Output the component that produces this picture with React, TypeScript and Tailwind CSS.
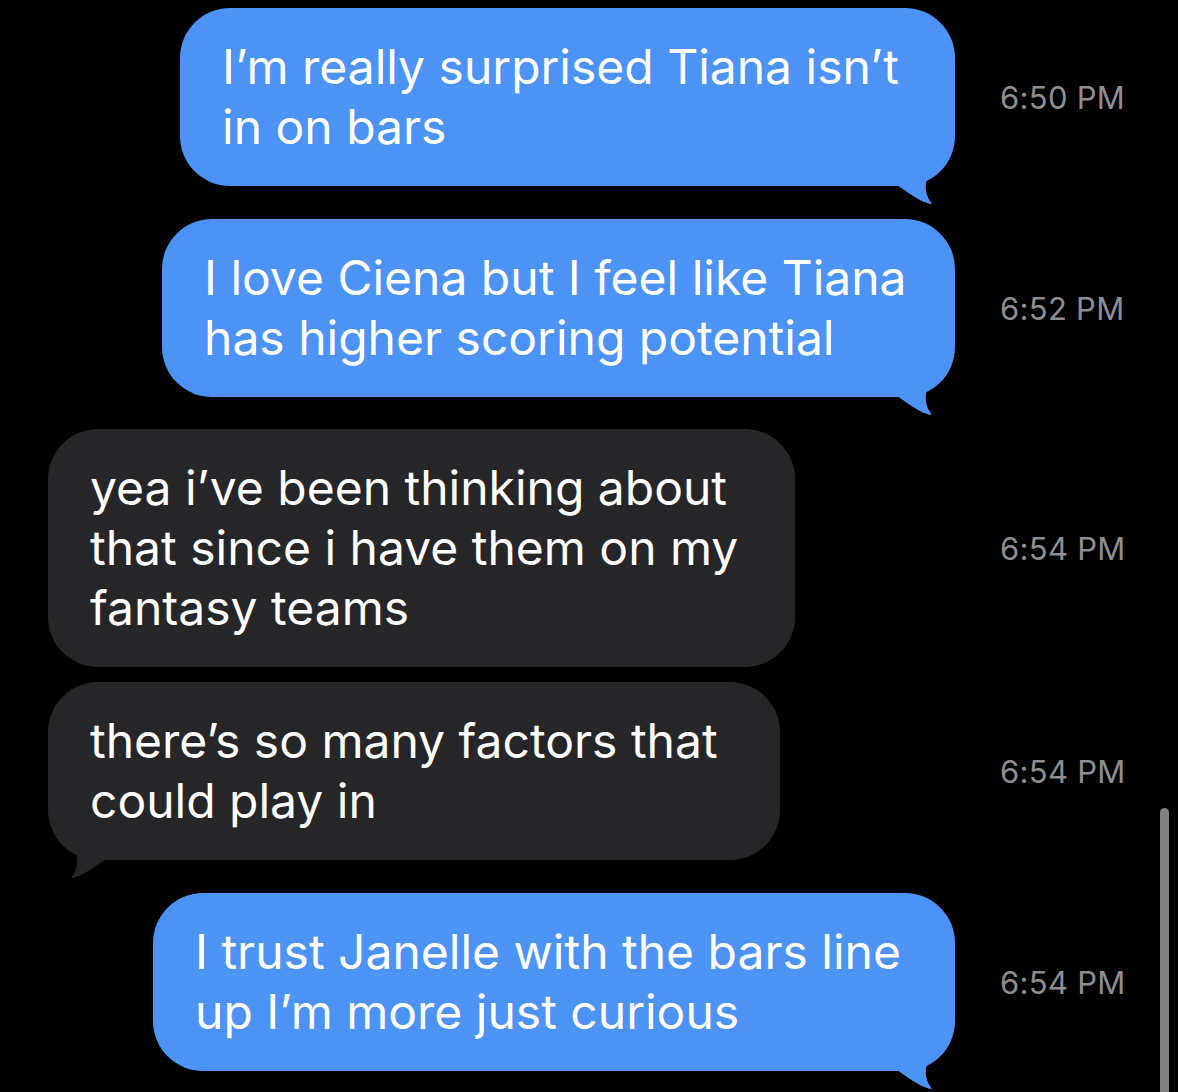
import React from 'react';

type Msg = {
  from: 'me' | 'them';
  lines: string[];
  time: string;
  width: number;
  tail: boolean;
  gap: string;
};

const messages: Msg[] = [
  { from: 'me', lines: ["I’m really surprised Tiana isn’t", 'in on bars'], time: '6:50 PM', width: 775, tail: true, gap: 'mt-[8px]' },
  { from: 'me', lines: ['I love Ciena but I feel like Tiana', 'has higher scoring potential'], time: '6:52 PM', width: 793, tail: true, gap: 'mt-[33px]' },
  { from: 'them', lines: ['yea i’ve been thinking about', 'that since i have them on my', 'fantasy teams'], time: '6:54 PM', width: 747, tail: false, gap: 'mt-[32px]' },
  { from: 'them', lines: ['there’s so many factors that', 'could play in'], time: '6:54 PM', width: 732, tail: true, gap: 'mt-[15px]' },
  { from: 'me', lines: ['I trust Janelle with the bars line', 'up I’m more just curious'], time: '6:54 PM', width: 802, tail: true, gap: 'mt-[33px]' },
];

// bubble tail, drawn for the right-hand side; flipped for the left
const Tail = ({ color, left }: { color: string; left?: boolean }) => (
  <svg
    width="60"
    height="70"
    viewBox="0 0 60 70"
    className={`absolute bottom-[-21px] ${left ? 'left-0 -scale-x-100' : 'right-0'}`}
  >
    <path
      d="M0 0 L55 0 C54 15 48 26 39 33 C32 38 30 46 31 54 C32 60 35 64 37 67 C31 67 20 61 2 48 L0 47 Z"
      fill={color}
    />
  </svg>
);

const Bubble = ({ m }: { m: Msg }) => {
  const mine = m.from === 'me';
  const color = mine ? '#4c93f5' : '#262629';
  return (
    <div
      className={`relative rounded-[50px] py-[29px] pl-[42px] ${mine ? 'bg-[#4c93f5]' : 'bg-[#262629]'}`}
      style={{ width: m.width }}
    >
      {m.tail && <Tail color={color} left={!mine} />}
      <div className="relative text-[48px] leading-[60px] text-white whitespace-nowrap">
        {m.lines.map((l, i) => (
          <div key={i}>{l}</div>
        ))}
      </div>
    </div>
  );
};

export default function App() {
  return (
    <div
      className="relative w-[1178px] h-[1092px] overflow-hidden bg-black"
      style={{ fontFamily: 'Inter, "Noto Sans", sans-serif' }}
    >
      <div className="flex flex-col">
        {messages.map((m, i) => (
          <div key={i} className={`flex items-center ${m.gap}`}>
            <div className={`flex w-[955px] ${m.from === 'me' ? 'justify-end' : 'justify-start pl-[48px]'}`}>
              <Bubble m={m} />
            </div>
            <div className="pl-[45px] pt-[2px] text-[31px] tracking-[0.3px] text-[#8e8e93] whitespace-nowrap">{m.time}</div>
          </div>
        ))}
      </div>

      {/* scroll indicator */}
      <div className="absolute left-[1160px] top-[808px] w-[9px] h-[300px] rounded-full bg-[#808080]" />
    </div>
  );
}
